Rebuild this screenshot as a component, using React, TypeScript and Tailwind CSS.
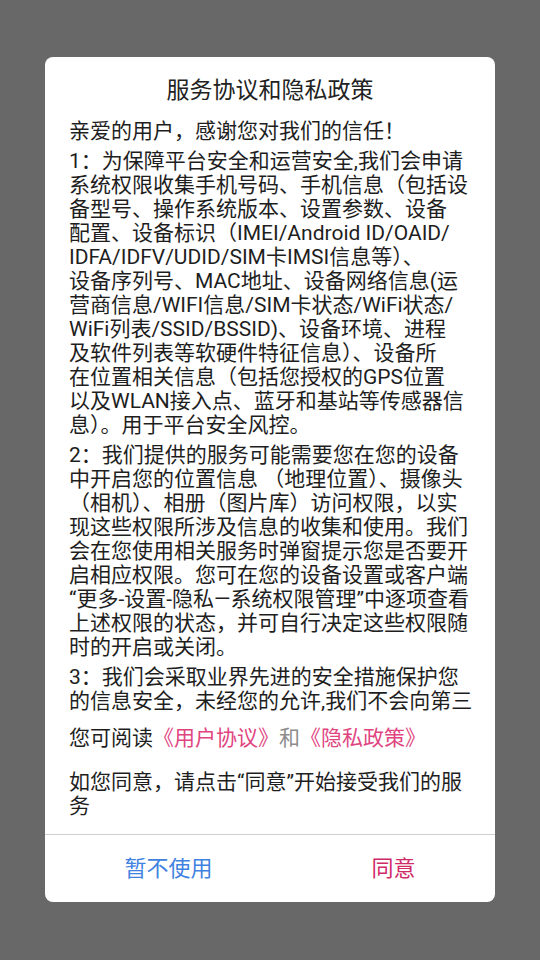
import * as React from "react"

const intro = ["亲爱的用户，感谢您对我们的信任！"]

const paragraphs: string[][] = [
  [
    "1：为保障平台安全和运营安全,我们会申请",
    "系统权限收集手机号码、手机信息（包括设",
    "备型号、操作系统版本、设置参数、设备",
    "配置、设备标识（IMEI/Android ID/OAID/",
    "IDFA/IDFV/UDID/SIM卡IMSI信息等）、",
    "设备序列号、MAC地址、设备网络信息(运",
    "营商信息/WIFI信息/SIM卡状态/WiFi状态/",
    "WiFi列表/SSID/BSSID)、设备环境、进程",
    "及软件列表等软硬件特征信息）、设备所",
    "在位置相关信息（包括您授权的GPS位置",
    "以及WLAN接入点、蓝牙和基站等传感器信",
    "息）。用于平台安全风控。",
  ],
  [
    "2：我们提供的服务可能需要您在您的设备",
    "中开启您的位置信息 （地理位置）、摄像头",
    "（相机）、相册（图片库）访问权限，以实",
    "现这些权限所涉及信息的收集和使用。我们",
    "会在您使用相关服务时弹窗提示您是否要开",
    "启相应权限。您可在您的设备设置或客户端",
    "“更多-设置-隐私—系统权限管理”中逐项查看",
    "上述权限的状态，并可自行决定这些权限随",
    "时的开启或关闭。",
  ],
  [
    "3：我们会采取业界先进的安全措施保护您",
    "的信息安全，未经您的允许,我们不会向第三",
    "方提供您的个人信息。",
  ],
]

function Lines({ lines }: { lines: string[] }) {
  return (
    <div>
      {lines.map((line, i) => (
        <div key={i} className="h-[24px] leading-[24px] whitespace-nowrap">
          {line}
        </div>
      ))}
    </div>
  )
}

export default function App() {
  return (
    <div className="h-[960px] bg-[#686868] px-[45px] pt-[57px] font-['Roboto','Noto_Sans_CJK_SC',sans-serif]">
      <div className="bg-white rounded-[8px] overflow-hidden">
        {/* Title */}
        <div className="pt-[19px] h-[49px] leading-[30px] text-center text-[23px] text-[#222222]">
          服务协议和隐私政策
        </div>

        {/* Scrollable agreement body */}
        <div className="mt-[13px] px-[24px] h-[594px] overflow-hidden text-[21px] text-[#1e1e1e]">
          <Lines lines={intro} />
          {paragraphs.map((p, i) => (
            <div key={i} className="mt-[6px]">
              <Lines lines={p} />
            </div>
          ))}
        </div>

        {/* Links */}
        <div className="mt-[13px] px-[24px] text-[21px] text-[#1e1e1e]">
          <div className="flex h-[24px] leading-[24px] whitespace-nowrap">
            <span>您可阅读</span>
            <span className="text-[#e0457f]">《用户协议》</span>
            <span className="text-[#8c8c8c]">和</span>
            <span className="text-[#e0457f]">《隐私政策》</span>
          </div>
          <div className="mt-[20px]">
            <Lines lines={["如您同意，请点击“同意”开始接受我们的服", "务"]} />
          </div>
        </div>

        {/* Actions */}
        <div className="mt-[16px] h-px bg-[#cfcfcf]" />
        <div className="flex h-[67px] items-center text-[22px]">
          <button className="flex-1 pl-[22px] text-center text-[#3f82df]">暂不使用</button>
          <button className="flex-1 pl-[22px] text-center text-[#d02a68]">同意</button>
        </div>
      </div>
    </div>
  )
}
